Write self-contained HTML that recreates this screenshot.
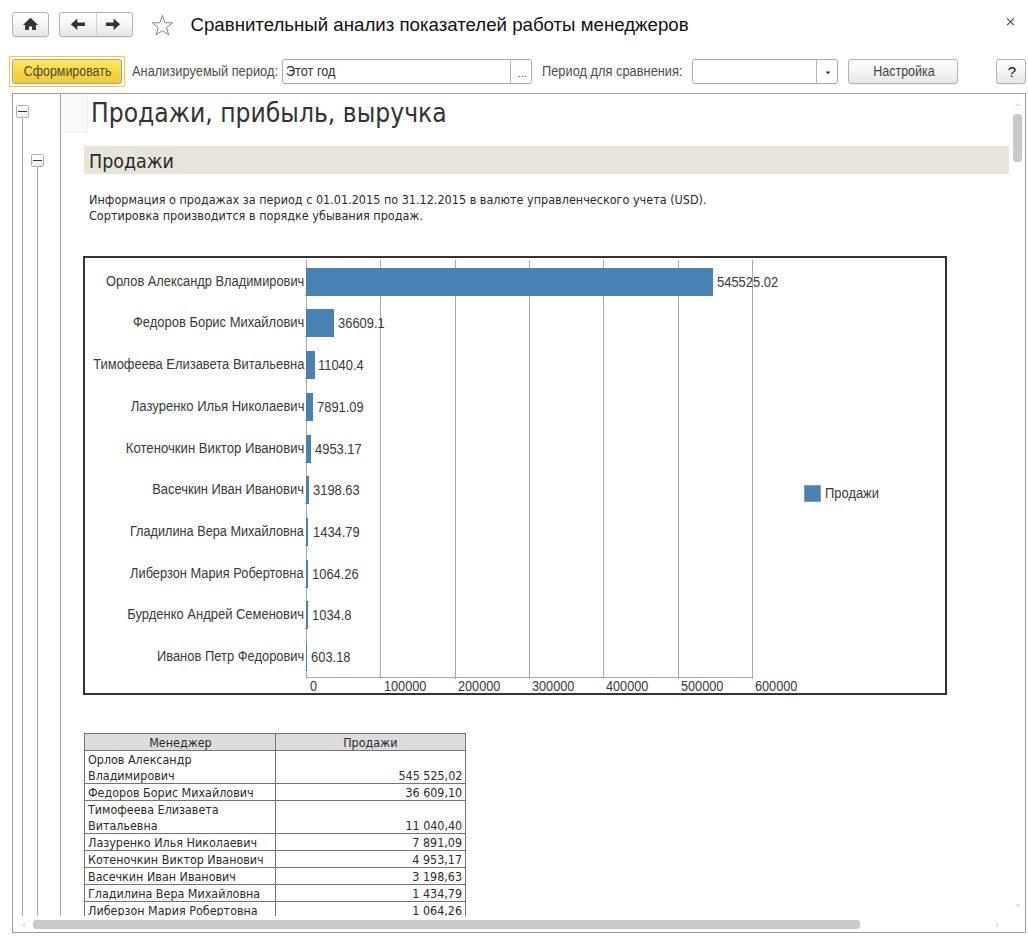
<!DOCTYPE html>
<html lang="ru"><head><meta charset="utf-8"><title>Сравнительный анализ показателей работы менеджеров</title>
<style>
*{box-sizing:border-box;margin:0;padding:0}
html,body{width:1028px;height:945px;overflow:hidden;background:#fff}
body{position:relative;font-family:"Liberation Sans",sans-serif;color:#333;font-size:13px}
.a{position:absolute;white-space:nowrap}
.btn{position:absolute;border:1px solid #b3b3b3;border-radius:3px;background:linear-gradient(#ffffff,#f6f6f6 45%,#e6e6e6);box-shadow:0 1px 0 rgba(0,0,0,.06)}
.fld{position:absolute;border:1px solid #a9a9a9;border-radius:3px;background:#fff}
.lbl{position:absolute;white-space:nowrap;color:#4d4d4d;font-size:13.8px;line-height:16px}
.lbl .s{transform:scaleX(.93)}
.vl{position:absolute;width:1px;background:#a6a6a6}
.tx{position:absolute;white-space:nowrap;line-height:1}
.cl{position:absolute;white-space:nowrap;font-size:13.8px;line-height:16px;color:#3a3a3a;text-align:right}
.vv{position:absolute;white-space:nowrap;font-size:13.8px;line-height:16px;color:#3a3a3a}
.cl .s,.vv .s{transform:scaleX(.937)}
.grid{position:absolute;width:1px;background:#a9a9a9}
.bar{position:absolute;background:#4682b4}
table{border-collapse:collapse;position:absolute;table-layout:fixed}
.th{font-family:"DejaVu Sans Condensed","Liberation Sans",sans-serif}
.s{display:inline-block;transform:scaleX(1);transform-origin:0 50%;white-space:nowrap}
td .s{position:relative;top:1px;transform:scaleX(.993)}
.r{transform-origin:100% 50%}
.c{transform-origin:50% 50%}
td{border:1px solid #757575;font-family:"DejaVu Sans Condensed","Liberation Sans",sans-serif;font-size:12.5px;line-height:16px;padding:0 3px 0 3px;vertical-align:bottom;color:#2b2b2b;white-space:nowrap;overflow:hidden}
td.h{background:#dcdcdc;text-align:center;vertical-align:middle}
td.n{text-align:right}
</style></head>
<body>
<div class="btn" style="left:12px;top:12px;width:37px;height:25px"><svg class="a" style="left:9px;top:4px" width="17" height="14" viewBox="0 0 17 14"><path d="M8.5 0.8 L0.9 7.9 H3.1 V13 H6.9 V9.6 H10.1 V13 H13.9 V7.9 H16.1 Z" fill="#333"/></svg></div>
<div class="btn" style="left:59px;top:12px;width:74px;height:25px"><div class="a" style="left:36px;top:0;width:1px;height:23px;background:#d0d0d0"></div><svg class="a" style="left:10px;top:5px" width="16" height="13" viewBox="0 0 16 13"><path d="M0.8 6.3 L7.3 0.6 V4.6 H14.9 V8 H7.3 V12 Z" fill="#333"/></svg><svg class="a" style="left:45px;top:5px" width="16" height="13" viewBox="0 0 16 13"><path d="M15.1 6.3 L8.6 0.6 V4.6 H1 V8 H8.6 V12 Z" fill="#333"/></svg></div>
<svg class="a" style="left:150px;top:13px" width="25" height="25" viewBox="0 0 25 25"><path d="M12.4 2.5 L14.9 9.7 L22.6 9.9 L16.5 14.5 L18.7 21.9 L12.4 17.5 L6.1 21.9 L8.3 14.5 L2.2 9.9 L9.9 9.7 Z" fill="#fff" stroke="#858585" stroke-width="1" stroke-linejoin="miter"/></svg>
<div class="tx" style="left:190.5px;top:14px;font-size:18.67px;line-height:22px;color:#111">Сравнительный анализ показателей работы менеджеров</div>
<svg class="a" style="left:1005px;top:17px" width="10" height="10" viewBox="0 0 10 10"><path d="M2.1 1.4 L8.9 8.2 M8.9 1.4 L2.1 8.2" stroke="#505050" stroke-width="1.15" fill="none"/></svg>
<div class="a" style="left:9px;top:56px;width:116px;height:31px;border:1px solid #f5c73a;border-radius:1px"></div>
<div class="btn" style="left:12px;top:59px;width:110px;height:25px;border-color:#a9a493;background:linear-gradient(#ffe95f,#f8d83f 50%,#efc930);text-align:center;line-height:16px;font-size:13.8px;color:#4a4a4a;padding-left:2px;padding-top:4px"><span class="s c" style="transform:scaleX(.9)">Сформировать</span></div>
<div class="lbl" style="left:132px;top:64px"><span class="s">Анализируемый период:</span></div>
<div class="fld" style="left:282px;top:59px;width:250px;height:25px"><div class="tx" style="left:2.9px;top:4px;font-size:13.8px;line-height:16px;color:#333"><span class="s" style="transform:scaleX(.92)">Этот год</span></div><div class="a" style="left:227px;top:0;width:1px;height:23px;background:#b5b5b5"></div><div class="tx" style="left:234.6px;top:5px;font-size:11px;line-height:16px;color:#4a4a4a">...</div></div>
<div class="lbl" style="left:542px;top:64px"><span class="s">Период для сравнения:</span></div>
<div class="fld" style="left:692px;top:59px;width:146px;height:25px"><div class="a" style="left:123px;top:0;width:1px;height:23px;background:#b5b5b5"></div><svg class="a" style="left:131.5px;top:10.5px" width="6" height="4" viewBox="0 0 6 4"><path d="M0.4 0.4 H5.6 L3 3.2 Z" fill="#444"/></svg></div>
<div class="btn" style="left:848px;top:59px;width:110px;height:25px;text-align:center;line-height:16px;font-size:13.8px;color:#444;padding-left:2px;padding-top:4px"><span class="s c" style="transform:scaleX(.906)">Настройка</span></div>
<div class="btn" style="left:996px;top:59px;width:30px;height:25px;text-align:center;line-height:23px;font-size:15px;color:#111;padding-left:2px">?</div>
<div class="a" style="left:12px;top:93px;width:1014px;height:840px;border:1px solid #9c9c9c;background:#fff"></div>
<div class="a" id="doc" style="left:13px;top:94px;width:1012px;height:822px;overflow:hidden">
<div class="vl" style="left:9px;top:23px;height:830px"></div>
<div class="vl" style="left:24px;top:72px;height:830px"></div>
<div class="vl" style="left:47px;top:0;height:830px"></div>
<div class="a" style="left:48px;top:0;width:27px;height:39px;background:#fafafa;border-right:2px solid #f3f3f3;border-bottom:2px solid #f3f3f3"></div>
<div class="a" style="left:3px;top:11px;width:13px;height:13px;border:1px solid #b0b0b0;border-radius:1.5px;background:linear-gradient(#fff,#fff 40%,#ececec)"><div class="a" style="left:1px;top:5px;width:9px;height:1px;background:#3a3a3a"></div></div>
<div class="a" style="left:18px;top:60px;width:13px;height:13px;border:1px solid #b0b0b0;border-radius:1.5px;background:linear-gradient(#fff,#fff 40%,#ececec)"><div class="a" style="left:1px;top:5px;width:9px;height:1px;background:#3a3a3a"></div></div>
<div class="tx th" style="left:77.5px;top:3px;font-size:27px;line-height:32px;color:#333"><span class="s" style="transform:scaleX(.969)">Продажи, прибыль, выручка</span></div>
<div class="a" style="left:71px;top:52px;width:925px;height:28px;background:#e7e5d9"></div>
<div class="tx th" style="left:76px;top:55px;font-size:20.3px;line-height:24px;color:#2a2a2a"><span class="s" style="transform:scaleX(.958)">Продажи</span></div>
<div class="tx th" style="left:76px;top:98px;font-size:12.5px;line-height:16px;color:#2b2b2b"><span class="s">Информация о продажах за период с 01.01.2015 по 31.12.2015 в валюте управленческого учета (USD).<br>Сортировка производится в порядке убывания продаж.</span></div>
<div class="a" id="chart" style="left:70px;top:162px;width:864px;height:439px;border:2px solid #333;background:#fff"></div>
<div class="grid" style="left:293px;top:166px;height:419px"></div>
<div class="grid" style="left:367px;top:166px;height:419px"></div>
<div class="grid" style="left:442px;top:166px;height:419px"></div>
<div class="grid" style="left:516px;top:166px;height:419px"></div>
<div class="grid" style="left:590px;top:166px;height:419px"></div>
<div class="grid" style="left:665px;top:166px;height:419px"></div>
<div class="grid" style="left:739px;top:166px;height:419px"></div>
<div class="a" style="left:293px;top:583px;width:447px;height:1px;background:#a9a9a9"></div>
<div class="vv" style="left:296.6px;top:585px"><span class="s" style="transform:scaleX(.92)">0</span></div>
<div class="vv" style="left:370.6px;top:585px"><span class="s" style="transform:scaleX(.92)">100000</span></div>
<div class="vv" style="left:445px;top:585px"><span class="s" style="transform:scaleX(.92)">200000</span></div>
<div class="vv" style="left:519px;top:585px"><span class="s" style="transform:scaleX(.92)">300000</span></div>
<div class="vv" style="left:593px;top:585px"><span class="s" style="transform:scaleX(.92)">400000</span></div>
<div class="vv" style="left:668px;top:585px"><span class="s" style="transform:scaleX(.92)">500000</span></div>
<div class="vv" style="left:742px;top:585px"><span class="s" style="transform:scaleX(.92)">600000</span></div>
<div class="a" style="left:292px;top:201px;width:1px;height:1px;background:#a9a9a9"></div>
<div class="bar" style="left:293px;top:174px;width:407.03px;height:28px"></div>
<div class="cl" style="right:721px;top:180px"><span class="s r" style="transform:scaleX(0.930)">Орлов Александр Владимирович</span></div>
<div class="vv" style="left:704.33px;top:181px"><span class="s">545525.02</span></div>
<div class="a" style="left:292px;top:242px;width:1px;height:1px;background:#a9a9a9"></div>
<div class="bar" style="left:293px;top:215px;width:28.25px;height:28px"></div>
<div class="cl" style="right:721px;top:221px"><span class="s r" style="transform:scaleX(0.940)">Федоров Борис Михайлович</span></div>
<div class="vv" style="left:324.55px;top:222px"><span class="s">36609.1</span></div>
<div class="a" style="left:292px;top:284px;width:1px;height:1px;background:#a9a9a9"></div>
<div class="bar" style="left:293px;top:257px;width:9.22px;height:28px"></div>
<div class="cl" style="right:721px;top:263px"><span class="s r" style="transform:scaleX(0.937)">Тимофеева Елизавета Витальевна</span></div>
<div class="vv" style="left:305.02px;top:264px"><span class="s">11040.4</span></div>
<div class="a" style="left:292px;top:326px;width:1px;height:1px;background:#a9a9a9"></div>
<div class="bar" style="left:293px;top:299px;width:6.87px;height:28px"></div>
<div class="cl" style="right:721px;top:305px"><span class="s r" style="transform:scaleX(0.947)">Лазуренко Илья Николаевич</span></div>
<div class="vv" style="left:304.17px;top:306px"><span class="s">7891.09</span></div>
<div class="a" style="left:292px;top:368px;width:1px;height:1px;background:#a9a9a9"></div>
<div class="bar" style="left:293px;top:341px;width:4.69px;height:28px"></div>
<div class="cl" style="right:721px;top:347px"><span class="s r" style="transform:scaleX(0.953)">Котеночкин Виктор Иванович</span></div>
<div class="vv" style="left:301.99px;top:348px"><span class="s">4953.17</span></div>
<div class="a" style="left:292px;top:409px;width:1px;height:1px;background:#a9a9a9"></div>
<div class="bar" style="left:293px;top:382px;width:3.38px;height:28px"></div>
<div class="cl" style="right:721px;top:388px"><span class="s r" style="transform:scaleX(0.937)">Васечкин Иван Иванович</span></div>
<div class="vv" style="left:299.68px;top:389px"><span class="s">3198.63</span></div>
<div class="a" style="left:292px;top:451px;width:1px;height:1px;background:#a9a9a9"></div>
<div class="bar" style="left:293px;top:424px;width:2.07px;height:28px"></div>
<div class="cl" style="right:721px;top:430px"><span class="s r" style="transform:scaleX(0.921)">Гладилина Вера Михайловна</span></div>
<div class="vv" style="left:299.57px;top:431px"><span class="s">1434.79</span></div>
<div class="a" style="left:292px;top:493px;width:1px;height:1px;background:#a9a9a9"></div>
<div class="bar" style="left:293px;top:466px;width:1.79px;height:28px"></div>
<div class="cl" style="right:721px;top:472px"><span class="s r" style="transform:scaleX(0.930)">Либерзон Мария Робертовна</span></div>
<div class="vv" style="left:299.29px;top:473px"><span class="s">1064.26</span></div>
<div class="a" style="left:292px;top:534px;width:1px;height:1px;background:#a9a9a9"></div>
<div class="bar" style="left:293px;top:507px;width:1.77px;height:28px"></div>
<div class="cl" style="right:721px;top:513px"><span class="s r" style="transform:scaleX(0.940)">Бурденко Андрей Семенович</span></div>
<div class="vv" style="left:299.27px;top:514px"><span class="s">1034.8</span></div>
<div class="a" style="left:292px;top:576px;width:1px;height:1px;background:#a9a9a9"></div>
<div class="bar" style="left:293px;top:549px;width:1.45px;height:28px"></div>
<div class="cl" style="right:721px;top:555px"><span class="s r" style="transform:scaleX(0.937)">Иванов Петр Федорович</span></div>
<div class="vv" style="left:297.75px;top:556px"><span class="s">603.18</span></div>
<div class="a" style="left:791px;top:391px;width:17px;height:17px;background:#4682b4;border:1px solid #8f9aa3"></div>
<div class="vv" style="left:812px;top:392px"><span class="s">Продажи</span></div>
<table style="left:71px;top:639px;width:381px"><colgroup><col style="width:191px"><col style="width:190px"></colgroup><tr style="height:17px"><td class="h"><span class="s c">Менеджер</span></td><td class="h"><span class="s c">Продажи</span></td></tr><tr style="height:33px"><td><span class="s">Орлов Александр<br>Владимирович</span></td><td class="n"><span class="s r">545 525,02</span></td></tr><tr style="height:17px"><td><span class="s">Федоров Борис Михайлович</span></td><td class="n"><span class="s r">36 609,10</span></td></tr><tr style="height:33px"><td><span class="s">Тимофеева Елизавета<br>Витальевна</span></td><td class="n"><span class="s r">11 040,40</span></td></tr><tr style="height:17px"><td><span class="s">Лазуренко Илья Николаевич</span></td><td class="n"><span class="s r">7 891,09</span></td></tr><tr style="height:17px"><td><span class="s">Котеночкин Виктор Иванович</span></td><td class="n"><span class="s r">4 953,17</span></td></tr><tr style="height:17px"><td><span class="s">Васечкин Иван Иванович</span></td><td class="n"><span class="s r">3 198,63</span></td></tr><tr style="height:17px"><td><span class="s">Гладилина Вера Михайловна</span></td><td class="n"><span class="s r">1 434,79</span></td></tr><tr style="height:17px"><td><span class="s">Либерзон Мария Робертовна</span></td><td class="n"><span class="s r">1 064,26</span></td></tr><tr style="height:17px"><td><span class="s">Бурденко Андрей Семенович</span></td><td class="n"><span class="s r">1 034,80</span></td></tr><tr style="height:17px"><td><span class="s">Иванов Петр Федорович</span></td><td class="n"><span class="s r">603,18</span></td></tr></table>
</div>
<div class="a" style="left:1013px;top:114px;width:9px;height:48px;border-radius:3.5px;background:#c9c9c9"></div>
<svg class="a" style="left:1014.5px;top:103px" width="6" height="3" viewBox="0 0 6 3"><path d="M0 3 H6 L3 0 Z" fill="#e0e0e0"/></svg>
<svg class="a" style="left:1014.5px;top:904px" width="6" height="3" viewBox="0 0 6 3"><path d="M0 0 H6 L3 3 Z" fill="#e0e0e0"/></svg>
<div class="a" style="left:33px;top:920px;width:827px;height:9px;border-radius:3.5px;background:#c9c9c9"></div>
<svg class="a" style="left:22px;top:921.5px" width="3" height="6" viewBox="0 0 3 6"><path d="M3 0 V6 L0 3 Z" fill="#e0e0e0"/></svg>
<svg class="a" style="left:996px;top:921.5px" width="3" height="6" viewBox="0 0 3 6"><path d="M0 0 V6 L3 3 Z" fill="#e0e0e0"/></svg>
</body></html>
